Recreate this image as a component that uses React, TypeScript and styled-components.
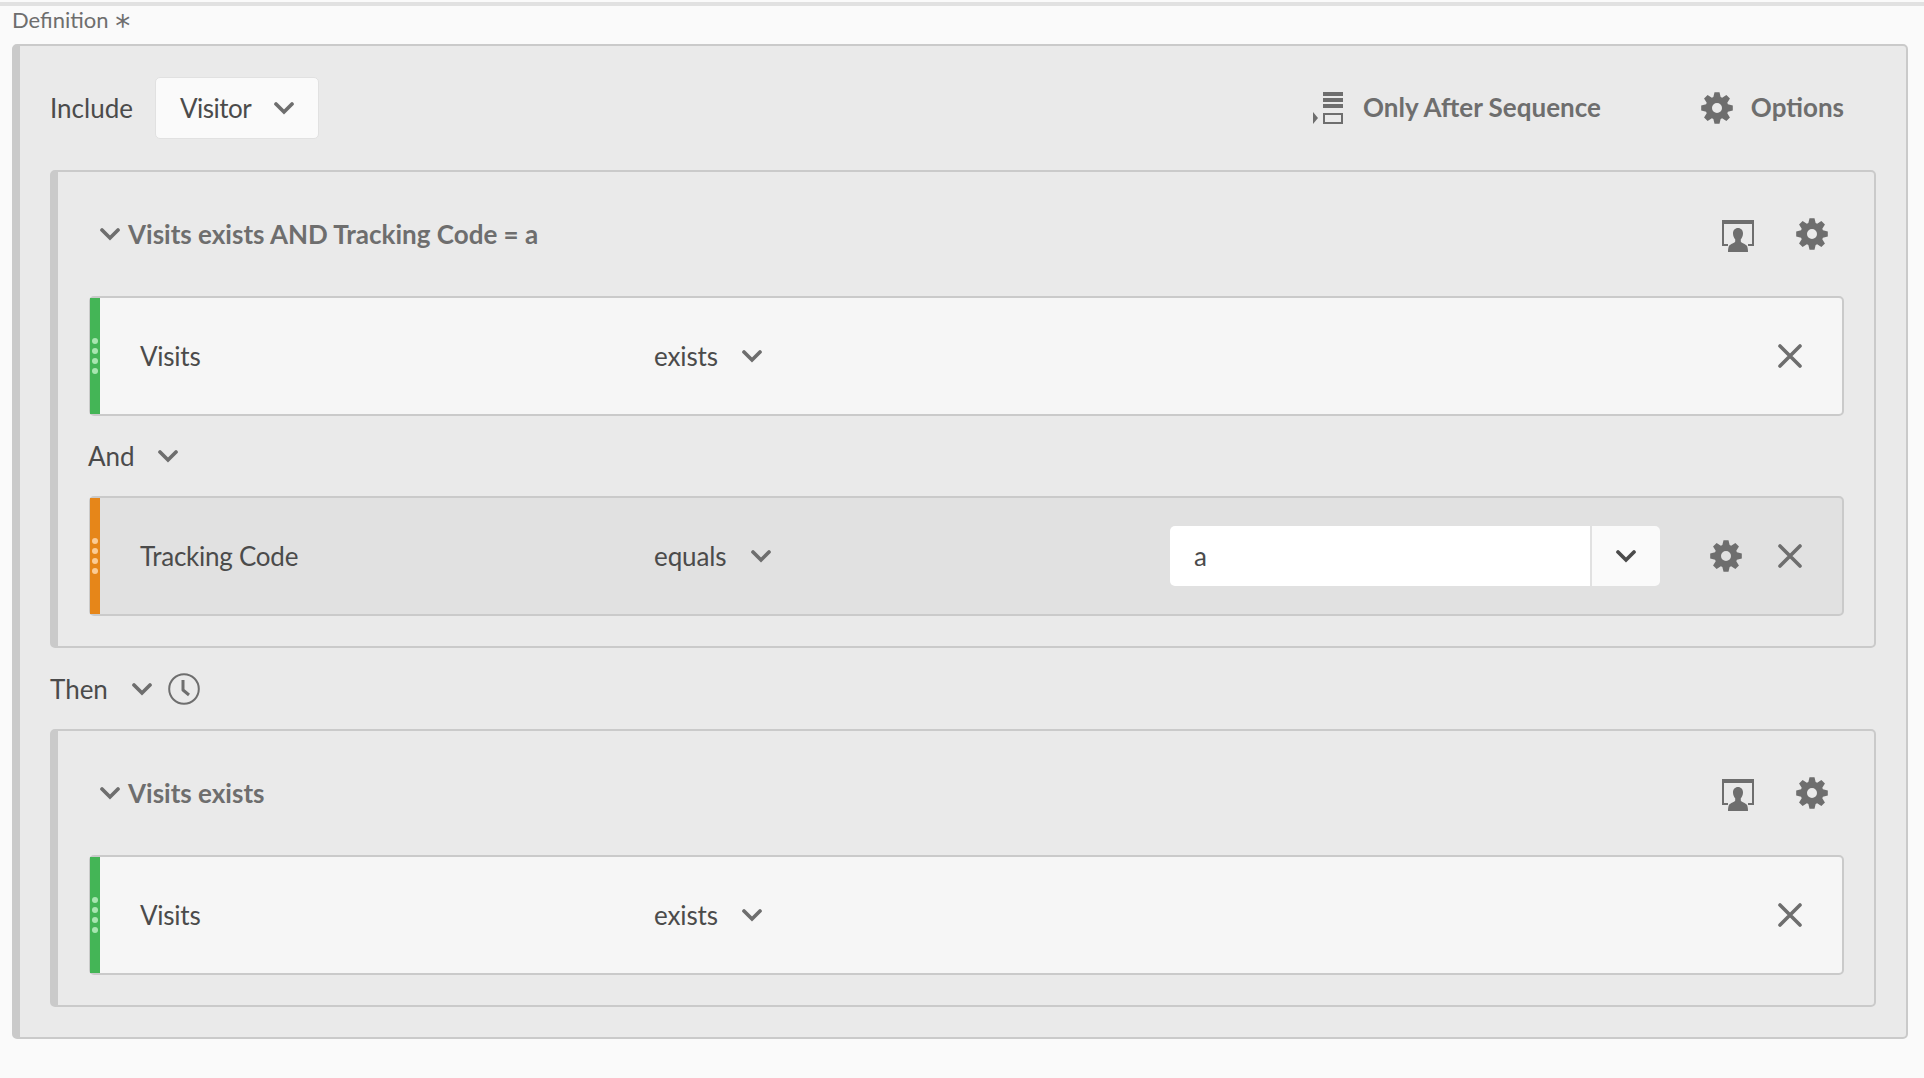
import styled, { createGlobalStyle } from "styled-components";

const gearPath = () => {
    const points: string[] = [];
    const teeth = 8;
    for (let i = 0; i < teeth; i++) {
        const a = (i * Math.PI * 2) / teeth - Math.PI / 2;
        const step = Math.PI / teeth;
        const corners: [number, number][] = [
            [11.5, -step * 0.82],
            [16, -step * 0.4],
            [16, step * 0.4],
            [11.5, step * 0.82],
        ];
        corners.forEach(([r, d]) => {
            points.push(`${(16 + r * Math.cos(a + d)).toFixed(2)} ${(16 + r * Math.sin(a + d)).toFixed(2)}`);
        });
    }
    const hole = "M16 11a5 5 0 1 0 0 10a5 5 0 1 0 0-10Z";
    return `M${points.join("L")}Z${hole}`;
};

const GearIcon = () => (
    <svg width="32" height="32" viewBox="0 0 32 32">
        <path d={gearPath()} fill="#6e6e6e" fillRule="evenodd" />
    </svg>
);

const Chevron = ({ dark }: { dark?: boolean }) => (
    <svg width="20" height="14" viewBox="0 0 20 14">
        <path
            d="M2 3l8 8 8-8"
            fill="none"
            stroke={dark ? "#4b4b4b" : "#6e6e6e"}
            strokeWidth="3.7"
            strokeLinecap="round"
            strokeLinejoin="miter"
        />
    </svg>
);

const CloseIcon = () => (
    <svg width="24" height="24" viewBox="0 0 24 24">
        <path d="M2 2l20 20M22 2L2 22" fill="none" stroke="#6e6e6e" strokeWidth="3.6" strokeLinecap="round" />
    </svg>
);

const ClockIcon = () => (
    <svg width="32" height="32" viewBox="0 0 32 32">
        <circle cx="16" cy="16" r="14.8" fill="none" stroke="#6e6e6e" strokeWidth="2" />
        <path d="M15 7v10l6 5" fill="none" stroke="#6e6e6e" strokeWidth="3" strokeLinejoin="round" />
    </svg>
);

const SequenceIcon = () => (
    <svg width="30" height="32" viewBox="0 0 30 32">
        <path d="M10 0h20v4H10zM10 6h20v4H10zM10 12h20v4H10zM0 20l5 6-5 6z" fill="#6e6e6e" />
        <rect x="11" y="22" width="18" height="9" fill="none" stroke="#6e6e6e" strokeWidth="2" />
    </svg>
);

const PersonIcon = () => (
    <svg width="32" height="32" viewBox="0 0 32 32">
        <path d="M0 0h32v4H0zM0 4h2v20h4v2H0zM30 4h2v22h-6v-2h4z" fill="#6e6e6e" />
        <path
            d="M16 8c3 0 5 2.300 5 5.500 0 2.500-1 4.500-2.200 5.800v2.200c0 1.500 5.200 2.500 6.200 4.500 .6 1.300 1 3.200 1 6H6c0-2.800.4-4.700 1-6 1-2 6.200-3 6.200-4.500v-2.200C12 18 11 16 11 13.500 11 10.300 13 8 16 8z"
            fill="#6e6e6e"
        />
    </svg>
);

const Grip = ({ color, dot }: { color: string; dot: string }) => (
    <GripBar $color={color}>
        <Dot $color={dot} />
        <Dot $color={dot} />
        <Dot $color={dot} />
        <Dot $color={dot} />
    </GripBar>
);

function App() {
    return (
        <Page>
            <GlobalStyle />
            <TopRule />
            <DefinitionLabel>
                Definition <Asterisk>*</Asterisk>
            </DefinitionLabel>
            <OuterPanel>
                <Toolbar>
                    <IncludeGroup>
                        <PlainLabel>Include</PlainLabel>
                        <SelectButton>
                            Visitor
                            <Chevron />
                        </SelectButton>
                    </IncludeGroup>
                    <ToolbarActions>
                        <ToolbarAction>
                            <SequenceIcon />
                            Only After Sequence
                        </ToolbarAction>
                        <ToolbarAction>
                            <GearIcon />
                            Options
                        </ToolbarAction>
                    </ToolbarActions>
                </Toolbar>

                <Container>
                    <ContainerHead>
                        <HeadTitle>
                            <Chevron />
                            Visits exists AND Tracking Code = a
                        </HeadTitle>
                        <HeadIcons>
                            <PersonIcon />
                            <GearIcon />
                        </HeadIcons>
                    </ContainerHead>
                    <Rule>
                        <Grip color="#44b556" dot="#a8e6b0" />
                        <RuleName>Visits</RuleName>
                        <Operator>
                            exists
                            <Chevron />
                        </Operator>
                        <RuleActions>
                            <CloseIcon />
                        </RuleActions>
                    </Rule>
                    <AndRow>
                        And
                        <Chevron />
                    </AndRow>
                    <Rule $active>
                        <Grip color="#e68619" dot="#fbcb94" />
                        <RuleName>Tracking Code</RuleName>
                        <Operator>
                            equals
                            <Chevron />
                        </Operator>
                        <ValueBox>
                            <ValueText>a</ValueText>
                            <ValueToggle>
                                <Chevron dark />
                            </ValueToggle>
                        </ValueBox>
                        <RuleActions>
                            <GearIcon />
                            <CloseIcon />
                        </RuleActions>
                    </Rule>
                </Container>

                <ThenRow>
                    Then
                    <Chevron />
                    <ClockIcon />
                </ThenRow>

                <Container>
                    <ContainerHead>
                        <HeadTitle>
                            <Chevron />
                            Visits exists
                        </HeadTitle>
                        <HeadIcons>
                            <PersonIcon />
                            <GearIcon />
                        </HeadIcons>
                    </ContainerHead>
                    <Rule>
                        <Grip color="#44b556" dot="#a8e6b0" />
                        <RuleName>Visits</RuleName>
                        <Operator>
                            exists
                            <Chevron />
                        </Operator>
                        <RuleActions>
                            <CloseIcon />
                        </RuleActions>
                    </Rule>
                </Container>
            </OuterPanel>
        </Page>
    );
}

export default App;

const GlobalStyle = createGlobalStyle`
    html, body {
        margin: 0;
        padding: 0;
        background: #fafafa;
    }
    * {
        box-sizing: border-box;
    }
`;

const Page = styled.div`
    width: 1924px;
    height: 1078px;
    overflow: hidden;
    padding-top: 2px;
    font-family: "Lato", "Open Sans", sans-serif;
    color: #4b4b4b;
    background: #fafafa;
`;

const TopRule = styled.div`
    height: 4px;
    background: #e1e1e1;
`;

const DefinitionLabel = styled.div`
    height: 38px;
    padding: 2px 0 0 12px;
    font-size: 22px;
    line-height: 24px;
    color: #6e6e6e;
`;

const Asterisk = styled.span`
    display: inline-block;
    margin-left: 1px;
    font-family: "DejaVu Sans", sans-serif;
    font-size: 30px;
    line-height: 24px;
    vertical-align: -8px;
`;

const OuterPanel = styled.div`
    width: 1896px;
    height: 995px;
    margin-left: 12px;
    padding: 0 30px 0 30px;
    background: #eaeaea;
    border: 2px solid #cacaca;
    border-left-width: 8px;
    border-radius: 5px;
`;

const Toolbar = styled.div`
    height: 124px;
    display: flex;
    align-items: center;
    justify-content: space-between;
`;

const IncludeGroup = styled.div`
    display: flex;
    align-items: center;
    gap: 22px;
`;

const PlainLabel = styled.span`
    font-size: 26px;
`;

const SelectButton = styled.div`
    width: 164px;
    height: 62px;
    padding: 0 24px;
    display: flex;
    align-items: center;
    justify-content: space-between;
    background: #fafafa;
    border: 1px solid #e1e1e1;
    border-radius: 5px;
    font-size: 26px;
    letter-spacing: -0.5px;
`;

const ToolbarActions = styled.div`
    display: flex;
    align-items: center;
    gap: 100px;
    padding-right: 32px;
`;

const ToolbarAction = styled.div`
    display: flex;
    align-items: center;
    gap: 18px;
    font-size: 26px;
    font-weight: 700;
    line-height: 28px;
    color: #6e6e6e;
    padding-bottom: 2px;

    svg {
        margin-bottom: -2px;
    }

    &:first-child svg {
        margin-right: 2px;
    }
`;

const Container = styled.div`
    padding: 0 30px 30px 31px;
    background: #eaeaea;
    border: 2px solid #cacaca;
    border-left-width: 8px;
    border-radius: 5px;
`;

const ContainerHead = styled.div`
    height: 124px;
    padding: 0 16px 0 11px;
    display: flex;
    align-items: center;
    justify-content: space-between;
`;

const HeadTitle = styled.div`
    display: flex;
    align-items: center;
    gap: 8px;
    font-size: 26px;
    font-weight: 700;
    color: #6e6e6e;
`;

const HeadIcons = styled.div`
    display: flex;
    align-items: center;
    gap: 42px;

    svg:first-child {
        margin-top: 3px;
    }
`;

const Rule = styled.div<{ $active?: boolean }>`
    height: 120px;
    display: flex;
    align-items: center;
    background: ${(p) => (p.$active ? "#e1e1e1" : "#f6f6f6")};
    border: 2px solid #cacaca;
    border-left-width: 1px;
    border-radius: 5px;
`;

const GripBar = styled.div<{ $color: string }>`
    align-self: stretch;
    width: 10px;
    display: flex;
    flex-direction: column;
    align-items: center;
    justify-content: center;
    gap: 4px;
    background: ${(p) => p.$color};
`;

const Dot = styled.span<{ $color: string }>`
    width: 6px;
    height: 6px;
    border-radius: 50%;
    background: ${(p) => p.$color};
`;

const RuleName = styled.div`
    width: 514px;
    margin-left: 40px;
    font-size: 26px;
    letter-spacing: -0.25px;
`;

const Operator = styled.div`
    width: 516px;
    display: flex;
    align-items: center;
    gap: 24px;
    font-size: 26px;
    letter-spacing: -0.1px;
`;

const RuleActions = styled.div`
    margin-left: auto;
    padding-right: 40px;
    display: flex;
    align-items: center;
    gap: 36px;
`;

const ValueBox = styled.div`
    width: 490px;
    height: 60px;
    display: flex;
    border-radius: 5px;
    overflow: hidden;
`;

const ValueText = styled.div`
    flex: 1;
    padding-left: 24px;
    display: flex;
    align-items: center;
    background: #ffffff;
    font-size: 26px;
`;

const ValueToggle = styled.div`
    width: 70px;
    display: flex;
    align-items: center;
    justify-content: center;
    background: #fafafa;
    border-left: 2px solid #e1e1e1;
`;

const AndRow = styled.div`
    height: 80px;
    margin-left: -1px;
    display: flex;
    align-items: center;
    gap: 23px;
    font-size: 26px;
`;

const ThenRow = styled.div`
    height: 81px;
    display: flex;
    align-items: center;
    gap: 24px;
    font-size: 26px;

    svg:last-child {
        margin-left: -8px;
    }
`;
